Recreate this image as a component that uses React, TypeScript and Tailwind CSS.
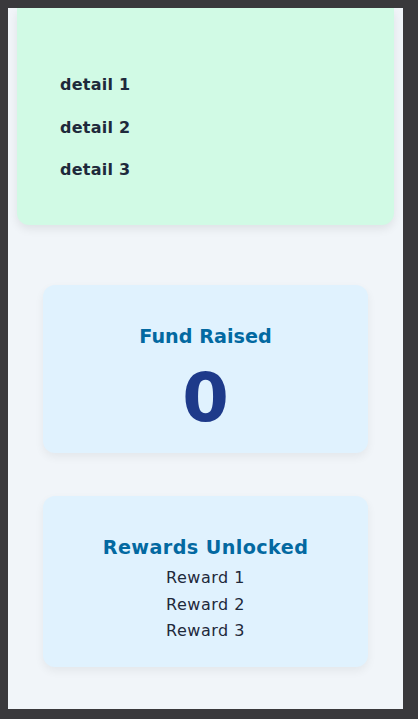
import React from "react";

const details = ["detail 1", "detail 2", "detail 3"];
const rewards = ["Reward 1", "Reward 2", "Reward 3"];

const App: React.FC = () => {
  return (
    <div
      className="w-[418px] h-[719px] bg-[#3a393c] pt-[8px] pl-[8px] pr-[15px] pb-[10px]"
      style={{ fontFamily: '"DejaVu Sans", Verdana, sans-serif' }}
    >
      <div className="h-full w-full bg-[#f1f5f9] overflow-hidden px-[9px]">
        {/* details card, top is scrolled out of view */}
        <div className="h-[217px] bg-[#d1fae5] rounded-b-xl shadow-[0_4px_10px_rgba(0,0,0,0.08)] pl-[43px] pt-[64px]">
          <div className="flex flex-col gap-4">
            {details.map((d) => (
              <p key={d} className="text-[16px] font-bold leading-[26.5px] tracking-[0.25px] text-[#1e293b]">
                {d}
              </p>
            ))}
          </div>
        </div>

        <div className="mx-[26px] mt-[60px] flex flex-col gap-[43px]">
          <div className="h-[168px] bg-[#e0f2fe] rounded-xl shadow-[0_4px_10px_rgba(0,0,0,0.06)] pt-[40px] flex flex-col items-center">
            <h2 className="text-[19.2px] leading-[24px] font-bold text-[#0369a1]">Fund Raised</h2>
            <div className="mt-[16px] text-[67px] leading-none font-bold text-[#1e3a8a]">0</div>
          </div>

          <div className="h-[171px] bg-[#e0f2fe] rounded-xl shadow-[0_4px_10px_rgba(0,0,0,0.06)] pt-[40px] flex flex-col items-center">
            <h2 className="text-[19.2px] leading-[24px] font-bold tracking-[0.4px] text-[#0369a1]">Rewards Unlocked</h2>
            <ul className="mt-[5px] flex flex-col items-center">
              {rewards.map((r) => (
                <li key={r} className="text-[16px] leading-[26.5px] tracking-[0.5px] text-[#1e293b]">
                  {r}
                </li>
              ))}
            </ul>
          </div>
        </div>
      </div>
    </div>
  );
};

export default App;
